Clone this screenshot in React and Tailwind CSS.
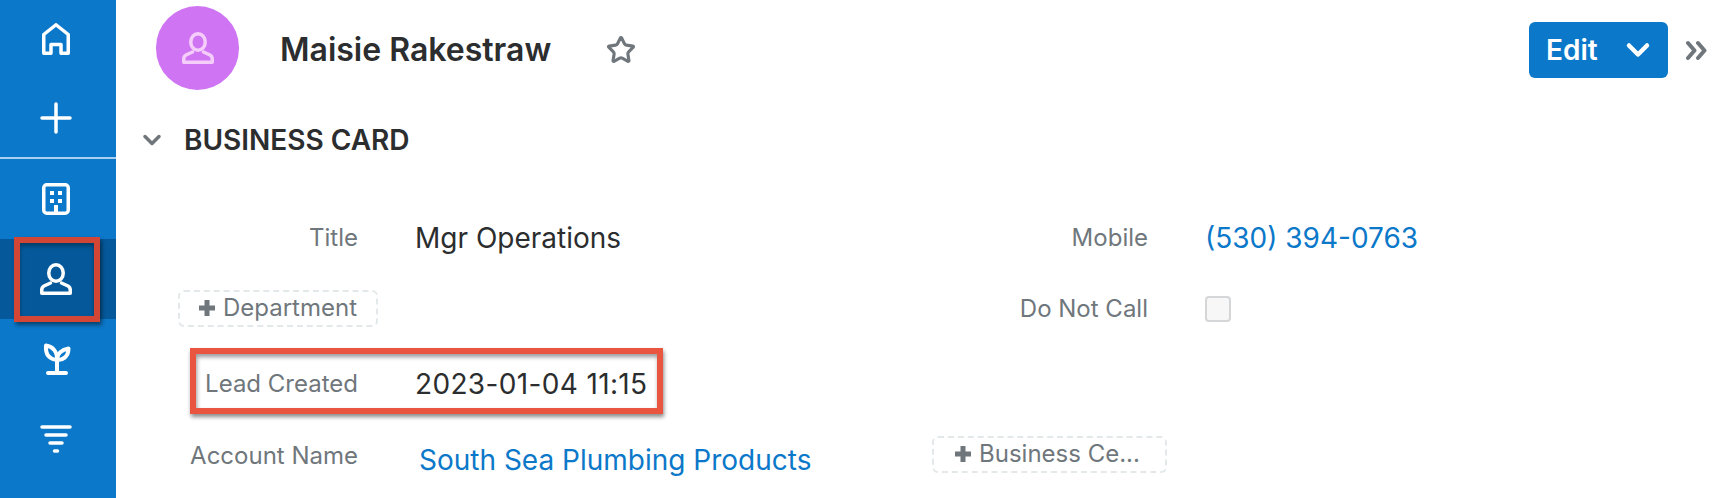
import { Star, ChevronDown } from "lucide-react";

const PersonIcon = ({ className }) => (
  <svg viewBox="0 0 32 32" fill="none" stroke="currentColor" strokeWidth="3.5" strokeLinejoin="round" className={className}>
    <ellipse cx="16" cy="10" rx="7.250" ry="8.250" />
    <path d="M10.500 20L4 23Q1.750 24.200 1.750 27V30.250H30.250V27Q30.250 24.200 28 23L21.500 20" strokeLinecap="round" />
  </svg>
);

const HomeIcon = () => (
  <svg viewBox="0 0 32 32" fill="none" stroke="currentColor" strokeWidth="3.5" strokeLinejoin="round" className="w-8 h-8">
    <path d="M16 1.750L3.750 11.500V30.250H11V21.500H21V30.250H28.250V11.500Z" />
  </svg>
);

const PlusIcon = () => (
  <svg viewBox="0 0 32 32" fill="none" stroke="currentColor" strokeWidth="3.5" strokeLinecap="round" className="w-8 h-8">
    <path d="M16 2V30M2 16H30" />
  </svg>
);

const BuildingIcon = () => (
  <svg viewBox="0 0 32 32" fill="none" className="w-8 h-8">
    <rect x="3.750" y="1.750" width="24.500" height="28.500" rx="3" stroke="currentColor" strokeWidth="3.5" />
    <path d="M10 8H14V12H10ZM18 8H22V12H18ZM10 16H14V20H10ZM18 16H22V20H18ZM14 22H18V31H14Z" fill="currentColor" />
  </svg>
);

const SproutIcon = () => (
  <svg viewBox="0 0 32 32" fill="none" stroke="currentColor" strokeWidth="4" strokeLinecap="round" strokeLinejoin="round" className="w-8 h-8">
    <path d="M17 30V17M8 30H26" />
    <path d="M6 2.500C5.500 9 7.500 16 17 17C17.500 9 13 3.500 6 2.500Z" />
    <path d="M28.500 5.500C22 6.500 17 10.500 17 17C22 17.500 28.500 14 28.500 5.500Z" />
  </svg>
);

const FunnelIcon = () => (
  <svg viewBox="0 0 32 32" fill="none" stroke="currentColor" strokeWidth="3.5" strokeLinecap="round" className="w-8 h-8">
    <path d="M2 4H30M6 12H26M10 20H22M14.500 28H17.500" />
  </svg>
);

const DoubleChevron = () => (
  <svg viewBox="0 0 22 21" fill="none" stroke="#6f777c" strokeWidth="4" strokeLinecap="round" strokeLinejoin="round" className="ml-[17px] w-[22px] h-[21px]">
    <path d="M3 3L9.500 10.500L3 18M13 3L19.500 10.500L13 18" />
  </svg>
);

const AddButton = ({ label, className }) => (
  <button className={`flex items-center justify-center gap-[8px] h-[37px] rounded-[6px] border-2 border-dashed border-[#e3e8ea] text-[24px] text-[#6f777c] ${className}`}>
    <svg viewBox="0 0 16 16" className="w-[16px] h-[16px]" fill="#6f777c">
      <path d="M5.500 0H10.500V5.500H16V10.500H10.500V16H5.500V10.500H0V5.500H5.500Z" />
    </svg>
    {label}
  </button>
);

const Label = ({ children, className = "" }) => (
  <div className={`text-right text-[24px] text-[#6f777c] ${className}`}>{children}</div>
);

const navItems = [
  { id: "home", icon: <HomeIcon />, h: "h-[78px]" },
  { id: "add", icon: <PlusIcon />, h: "h-[81px] border-b-2 border-[#a9d0ee]" },
  { id: "accounts", icon: <BuildingIcon />, h: "h-[80px]" },
  { id: "leads", icon: <PersonIcon className="w-8 h-8" />, h: "h-[80px] bg-[#05599b]", active: true },
  { id: "targets", icon: <SproutIcon />, h: "h-[80px]" },
  { id: "filter", icon: <FunnelIcon />, h: "h-[80px]" },
];

export default function App() {
  return (
    <div className="flex h-[498px] w-[1712px] overflow-hidden bg-white font-['Inter',sans-serif] text-[#2b2d2e]">
      <nav className="w-[116px] shrink-0 bg-[#0b78c9] text-white">
        {navItems.map((item) => (
          <div key={item.id} className={`relative flex items-center justify-center pr-[4px] ${item.h}`}>
            {item.icon}
            {item.active && (
              <div className="absolute left-[14px] top-[-2px] w-[86px] h-[85px] border-[6px] border-[#d34534] shadow-[2px_3px_4px_rgba(0,0,0,0.45),inset_0_3px_4px_rgba(0,0,0,0.35)]" />
            )}
          </div>
        ))}
      </nav>

      <main className="relative flex-1 flex flex-col">
        <header className="flex items-center h-[100px] pl-[40px] pr-[5px]">
          <div className="flex items-center justify-center self-start mt-[6px] w-[83px] h-[84px] rounded-full bg-[#cf75f3] text-[#f5cdfb]">
            <PersonIcon className="w-8 h-8" />
          </div>
          <h1 className="ml-[41px] text-[32px] font-semibold">Maisie Rakestraw</h1>
          <Star className="ml-[55px] w-[30px] h-[30px] text-[#6f777c]" strokeWidth={2.5} />
          <button className="ml-auto flex items-center justify-between w-[139px] h-[56px] pl-[17px] pr-[12px] rounded-[6px] bg-[#0b78c9] text-white text-[28px] font-semibold">
            Edit
            <ChevronDown className="w-[36px] h-[36px]" strokeWidth={3} />
          </button>
          <DoubleChevron />
        </header>

        <div className="flex items-center h-[80px] pl-[22px]">
          <ChevronDown className="w-[28px] h-[28px] text-[#6f777c]" strokeWidth={3} />
          <h2 className="ml-[18px] text-[28px] font-semibold">BUSINESS CARD</h2>
        </div>

        <div className="grid grid-cols-[242px_428px_248px_1fr] grid-rows-[72px_68px_84px_60px] gap-x-[57px] items-center mt-[22px]">
          <Label>Title</Label>
          <div className="text-[28px]">Mgr Operations</div>
          <Label>Mobile</Label>
          <div className="text-[28px] text-[#0b78c9]">(530) 394-0763</div>

          <div className="col-span-2">
            <AddButton label="Department" className="ml-[62px] w-[200px]" />
          </div>
          <Label className="pt-[2px]">Do Not Call</Label>
          <div className="mt-[2px] w-[26px] h-[26px] rounded-[4px] border-2 border-[#d4d6d7] bg-[#f7f7f7]" />

          <Label>Lead Created</Label>
          <div className="relative text-[28px] tracking-[0.35px]">
            2023-01-04 11:15
            <div className="absolute left-[-225px] top-[-15px] w-[473px] h-[66px] border-[6px] border-[#ea5540] shadow-[1px_3px_4px_rgba(0,0,0,0.45),inset_1px_3px_4px_rgba(0,0,0,0.4)]" />
          </div>
          <div className="col-span-2" />

          <Label>Account Name</Label>
          <div className="pl-[4px] pt-[8px] text-[28px] text-[#0b78c9]">South Sea Plumbing Products</div>
          <div className="col-span-2 -mt-[4px]">
            <AddButton label="Business Ce..." className="ml-[32px] w-[235px] pr-[4px]" />
          </div>
        </div>
      </main>
    </div>
  );
}
